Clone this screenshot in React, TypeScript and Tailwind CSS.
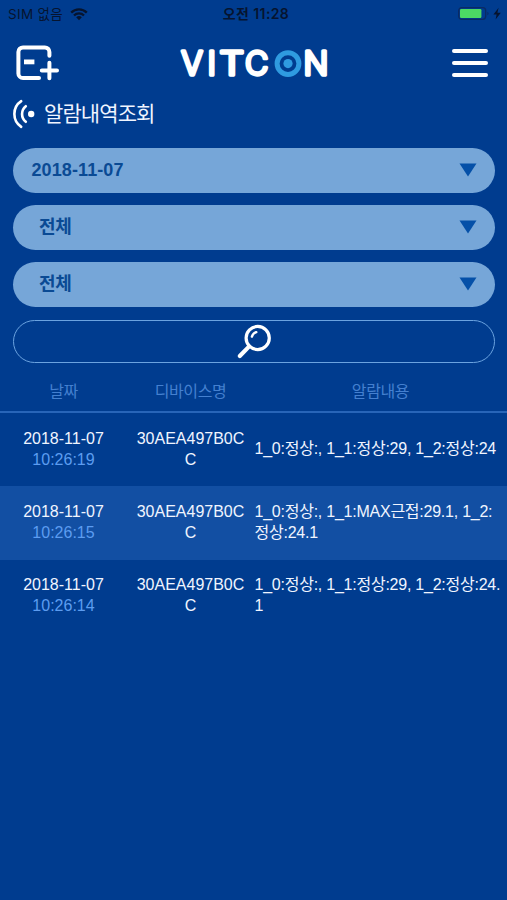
type AlarmRow = {
  date: string;
  time: string;
  device: string[];
  content: string[];
};

const FILTERS = [
  { label: "2018-11-07", className: "pl-[18.5px] text-[18px] tracking-[0.1px]" },
  { label: "전체", className: "pl-[26px] text-[18px] tracking-[-0.3px]" },
  { label: "전체", className: "pl-[26px] text-[18px] tracking-[-0.3px]" },
];

const ROWS: AlarmRow[] = [
  {
    date: "2018-11-07",
    time: "10:26:19",
    device: ["30AEA497B0C", "C"],
    content: ["1_0:정상:, 1_1:정상:29, 1_2:정상:24"],
  },
  {
    date: "2018-11-07",
    time: "10:26:15",
    device: ["30AEA497B0C", "C"],
    content: ["1_0:정상:, 1_1:MAX근접:29.1, 1_2:", "정상:24.1"],
  },
  {
    date: "2018-11-07",
    time: "10:26:14",
    device: ["30AEA497B0C", "C"],
    content: ["1_0:정상:, 1_1:정상:29, 1_2:정상:24.", "1"],
  },
];

function StatusBar() {
  return (
    <div className="grid h-[28px] grid-cols-3 items-center leading-none text-[#06142f] font-['Inter','Noto_Sans_CJK_KR',sans-serif]">
      <div className="flex items-center pl-[8px]">
        <span className="text-[13.5px] leading-[20px] tracking-[0.3px] whitespace-nowrap">SIM 없음</span>
        <svg width="18" height="13" viewBox="0 0 18 13" className="ml-[7px]" fill="none" stroke="#06142f">
          <path d="M1.2 4.6a11 11 0 0 1 15.6 0" strokeWidth="2.3" />
          <path d="M4 7.5a7 7 0 0 1 10 0" strokeWidth="2.3" />
          <path d="M9 12.2 6.2 9.3a4 4 0 0 1 5.6 0z" fill="#06142f" stroke="none" />
        </svg>
      </div>
      <div className="pl-[5px] text-center text-[14px] leading-[20px] font-semibold tracking-[0.4px] whitespace-nowrap">오전 11:28</div>
      <div className="flex items-center justify-end pr-[4px]">
        <svg width="45" height="14" viewBox="0 0 45 14">
          <rect x="0.7" y="0.7" width="27" height="11.6" rx="3" fill="none" stroke="#0a2a63" strokeWidth="1.3" />
          <rect x="2" y="2" width="21.4" height="9" rx="1.2" fill="#4cd964" />
          <path d="M29.4 4.8c1.6.6 1.6 2.8 0 3.4z" fill="#0a2a63" />
          <path d="M40.6 0.8 35.4 7.4h3.2l-1 5.2 5.2-6.9h-3.4z" fill="#06142f" />
        </svg>
      </div>
    </div>
  );
}

function Logo() {
  return (
    <svg width="152" height="60" viewBox="0 0 152 60" className="mr-[3px]">
      {/* thin glyphs with a round outline give the letters their soft ends */}
      <g
        fill="#fff"
        stroke="#fff"
        strokeWidth="3.4"
        strokeLinejoin="round"
        fontSize="32"
        className="font-['Inter',sans-serif] font-light"
      >
        <text x="2.2" y="42.2">V</text>
        <text x="28.6" y="42.2">I</text>
        <text x="40.6" y="42.2" textLength="24.5" lengthAdjust="spacingAndGlyphs">T</text>
        <text x="66" y="42.2">C</text>
        <text x="124.6" y="42.2" textLength="24.8" lengthAdjust="spacingAndGlyphs">N</text>
      </g>
      <circle cx="109" cy="30.6" r="10.9" fill="none" stroke="#2f9be0" strokeWidth="5" />
      <circle cx="109" cy="30.6" r="4.6" fill="#2f9be0" />
    </svg>
  );
}

function Header() {
  return (
    <header className="flex h-[69px] items-center justify-between pr-[19px] pl-[16px]">
      <svg width="44" height="36" viewBox="0 0 44 36" fill="none" stroke="#fff">
        <path d="M33.4 10.8V7a4.6 4.6 0 0 0-4.6-4.6H7A4.6 4.6 0 0 0 2.4 7v21.4A4.6 4.6 0 0 0 7 33h16" strokeWidth="4" strokeLinecap="round" />
        <path d="M8 16.9h10.4" strokeWidth="4.8" />
        <path d="M25.8 25.4h15.2M33.4 17.8v15.4" strokeWidth="4" strokeLinecap="round" />
      </svg>
      <Logo />
      <div className="flex w-[36px] flex-col gap-[8px]">
        <span className="h-1 rounded-full bg-white" />
        <span className="h-1 rounded-full bg-white" />
        <span className="h-1 rounded-full bg-white" />
      </div>
    </header>
  );
}

function SearchIcon() {
  return (
    <svg width="36" height="36" viewBox="0 0 36 36" fill="none" stroke="#fff" strokeLinecap="round">
      <circle cx="21.7" cy="14" r="11.6" strokeWidth="3.2" />
      <path d="M13.2 22.4 3.8 32" strokeWidth="4.2" />
      <path d="M15.9 12.6a6.4 6.4 0 0 1 4.4-4.4" strokeWidth="2.4" />
    </svg>
  );
}

export default function App() {
  return (
    <div className="h-[900px] w-[507px] overflow-hidden bg-[#003c8f] font-['Liberation_Sans','Noto_Sans_CJK_KR',sans-serif] text-[#f0f5ff]">
      <StatusBar />
      <Header />

      <div className="flex h-[34px] items-center pl-[12px]">
        <svg width="23" height="30" viewBox="0 0 23 30" fill="none" stroke="#fff" strokeWidth="2.6" strokeLinecap="round">
          <path d="M9.2 2.2a15.4 15.4 0 0 0 0 25.6" />
          <path d="M13.8 7.2a10 10 0 0 0 0 15.6" />
          <circle cx="19.2" cy="15" r="3.2" fill="#fff" stroke="none" />
        </svg>
        <h1 className="ml-[9px] text-[21px] leading-[30px] tracking-[-0.9px]">알람내역조회</h1>
      </div>

      <div className="mr-[12px] ml-[13px] mt-[17px] flex flex-col gap-[12px]">
        {FILTERS.map((filter, i) => (
          <button
            key={i}
            className="flex h-[45px] items-center justify-between rounded-full bg-[#76a6d8] pr-[18px] font-bold text-[#0a4a94]"
          >
            <span className={filter.className}>{filter.label}</span>
            <svg width="18" height="14" viewBox="0 0 18 14" className="mb-px">
              <path d="M0.5 0.5h17L9 13.5z" fill="#0550a8" />
            </svg>
          </button>
        ))}
        <button className="mt-px flex h-[43px] items-center justify-center rounded-full border-[1.5px] border-[#6ba3e0]">
          <SearchIcon />
        </button>
      </div>

      <div className="mt-[7px]">
        <div className="grid h-[43px] grid-cols-[127px_127px_253px] items-center border-b-2 border-[#2865b8] pt-[2px] text-center text-[16px] tracking-[-0.4px] text-[#4480d0]">
          <span>날짜</span>
          <span>디바이스명</span>
          <span>알람내용</span>
        </div>
        {ROWS.map((row) => (
          <div
            key={row.time}
            className="grid h-[73.3px] grid-cols-[127px_127px_253px] items-center pb-[2px] text-[16px] leading-[21px] whitespace-nowrap odd:bg-[#124fa3]"
          >
            <div className="text-center">
              <p>{row.date}</p>
              <p className="text-[#5c9cf0]">{row.time}</p>
            </div>
            <div className="text-center">
              {row.device.map((line) => (
                <p key={line}>{line}</p>
              ))}
            </div>
            <div className="pl-[0.5px] tracking-[-0.24px]">
              {row.content.map((line) => (
                <p key={line}>{line}</p>
              ))}
            </div>
          </div>
        ))}
      </div>
    </div>
  );
}
